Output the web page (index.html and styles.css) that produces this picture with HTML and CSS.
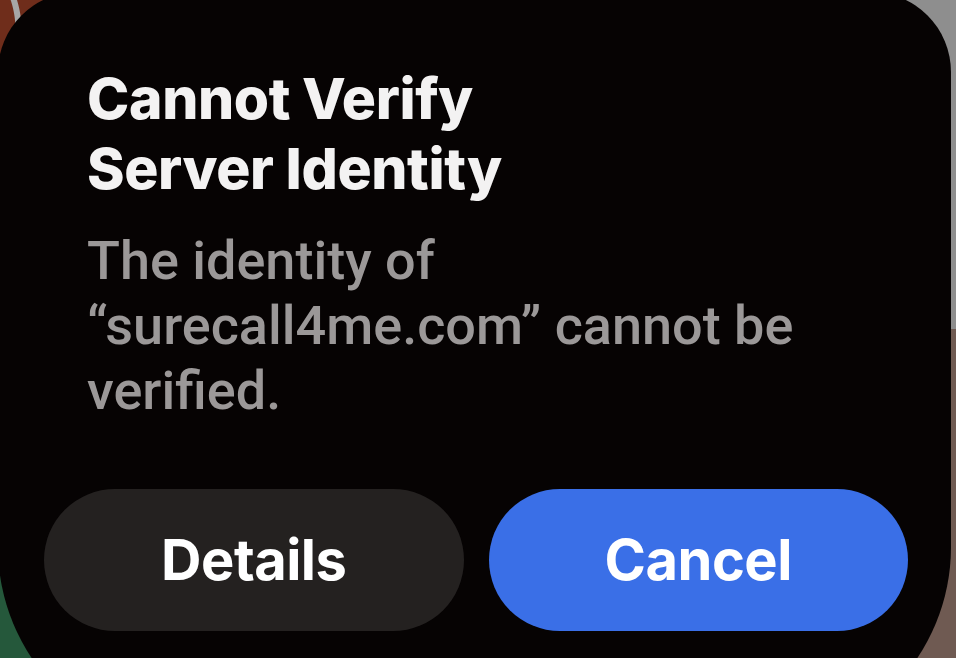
FILE: index.html
```html
<!DOCTYPE html>
<html lang="en">
<head>
<meta charset="utf-8">
<title>Cannot Verify Server Identity</title>
<link rel="stylesheet" href="styles.css">
</head>
<body>
<div class="wallpaper">
  <div class="alert" role="alertdialog" aria-labelledby="alert-title">
    <h1 class="alert-title" id="alert-title">Cannot Verify<br>Server Identity</h1>
    <p class="alert-message">The identity of<br>“surecall4me.com” cannot be<br>verified.</p>
    <div class="alert-actions">
      <button class="btn btn-secondary" type="button">Details</button>
      <button class="btn btn-primary" type="button">Cancel</button>
    </div>
  </div>
</div>
</body>
</html>
```
FILE: styles.css
```css
html, body {
  margin: 0;
  padding: 0;
  width: 956px;
  height: 658px;
  overflow: hidden;
}

.wallpaper {
  width: 956px;
  height: 658px;
  overflow: hidden;
  background:
    radial-gradient(circle at -80px 30px, transparent 95px, #a7a7a7 96px, #a7a7a7 101px, transparent 102px),
    conic-gradient(from 0deg at 50% 50%, #8e8e8e 0deg 90deg, #6f5a52 90deg 135deg, #2e6466 135deg 180deg, #7d6357 180deg 225deg, #25583b 225deg 270deg, #6f2d1b 270deg 360deg);
}

.alert {
  box-sizing: border-box;
  width: 953px;
  height: 755px;
  margin: -8px 0 0 -2px;
  padding: 72px 43px 0 46px;
  background: #060303;
  border-radius: 80px 80px 200px 200px;
  display: flex;
  flex-direction: column;
  font-family: Inter, "Liberation Sans", sans-serif;
}

.alert-title {
  margin: 0 0 0 43px;
  font-size: 57px;
  line-height: 70px;
  font-weight: 800;
  letter-spacing: -0.4px;
  color: #f3f2f2;
}

.alert-message {
  margin: 24px 0 0 43px;
  font-family: Roboto, "Liberation Sans", sans-serif;
  font-size: 54px;
  line-height: 65px;
  font-weight: 500;
  color: #9b9898;
}

.alert-actions {
  display: flex;
  gap: 25px;
  margin-top: 66px;
}

.btn {
  flex: 1;
  height: 142px;
  border: none;
  border-radius: 71px;
  font-family: Inter, "Liberation Sans", sans-serif;
  font-size: 56px;
  font-weight: 700;
  letter-spacing: -0.5px;
  color: #ffffff;
  padding: 0;
}

.btn-secondary {
  background: #242120;
}

.btn-primary {
  background: #3a6fe7;
}
```
